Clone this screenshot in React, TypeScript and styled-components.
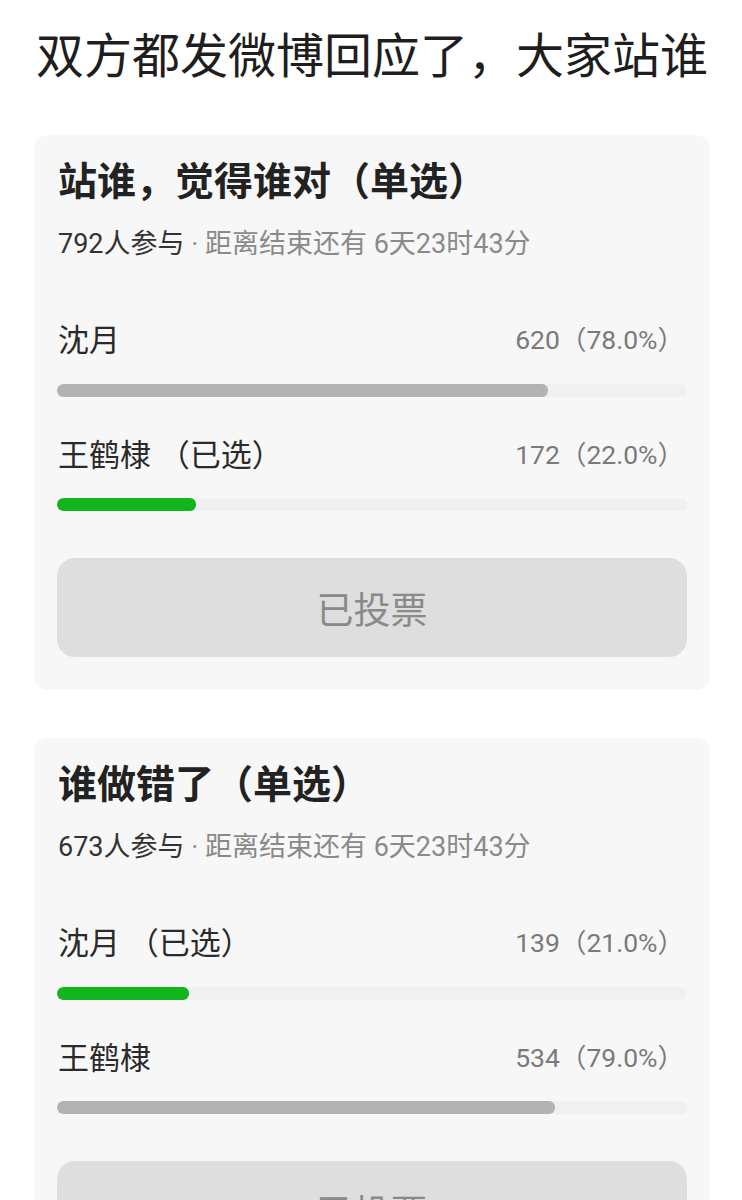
import React from 'react';
import styled, { createGlobalStyle } from 'styled-components';

type Option = { name: string; count: number; percent: number; chosen?: boolean };
type Poll = { title: string; people: number; left: string; options: Option[] };

const polls: Poll[] = [
    {
        title: '站谁，觉得谁对（单选）',
        people: 792,
        left: '6天23时43分',
        options: [
            { name: '沈月', count: 620, percent: 78.0 },
            { name: '王鹤棣', count: 172, percent: 22.0, chosen: true },
        ],
    },
    {
        title: '谁做错了（单选）',
        people: 673,
        left: '6天23时43分',
        options: [
            { name: '沈月', count: 139, percent: 21.0, chosen: true },
            { name: '王鹤棣', count: 534, percent: 79.0 },
        ],
    },
];

// 투표 카드 목록
function App() {
    return (
        <Page>
            <GlobalStyle />
            <Heading>双方都发微博回应了，大家站谁</Heading>
            <CardList>
                {polls.map((poll) => (
                    <Card key={poll.title}>
                        <Title>{poll.title}</Title>
                        <Meta>
                            <strong>{poll.people}人参与</strong> · 距离结束还有 {poll.left}
                        </Meta>
                        {poll.options.map((opt, i) => (
                            <OptionBlock key={opt.name} first={i === 0}>
                                <OptionRow>
                                    <OptionName>
                                        {opt.name}
                                        {opt.chosen && ' （已选）'}
                                    </OptionName>
                                    <OptionCount>
                                        {opt.count}（{opt.percent.toFixed(1)}%）
                                    </OptionCount>
                                </OptionRow>
                                <Track first={i === 0}>
                                    <Fill chosen={!!opt.chosen} style={{ width: `${opt.percent}%` }} />
                                </Track>
                            </OptionBlock>
                        ))}
                        <VotedBtn disabled>已投票</VotedBtn>
                    </Card>
                ))}
            </CardList>
        </Page>
    );
}

const GlobalStyle = createGlobalStyle`
    html, body {
        margin: 0;
        padding: 0;
        background: #fff;
    }
    body {
        font-family: Roboto, "Noto Sans CJK SC", sans-serif;
    }
`;

const Page = styled.div`
    width: 742px;
    height: 1200px;
    overflow: hidden;
    background: #fff;
`;

const Heading = styled.h1`
    margin: 0;
    padding: 27px 36px 0;
    font-size: 48px;
    line-height: 60px;
    font-weight: 400;
    color: #1e1e1e;
    white-space: nowrap;
`;

const CardList = styled.div`
    display: flex;
    flex-direction: column;
    gap: 48px;
    margin: 48px 32px 0 34px;
`;

const Card = styled.div`
    background: #f7f7f7;
    border-radius: 14px;
    padding: 23px 23px 33px;
`;

const Title = styled.div`
    font-size: 39px;
    line-height: 48px;
    font-weight: bold;
    color: #222;
    padding-left: 1px;
`;

const Meta = styled.div`
    margin-top: 23px;
    font-size: 27px;
    line-height: 30px;
    color: #8a8a8a;
    padding-left: 1px;
    white-space: nowrap;
    & strong {
        font-weight: 400;
        color: #333;
    }
`;

const OptionBlock = styled.div<{ first: boolean }>`
    margin-top: ${(p) => (p.first ? '58px' : '35px')};
`;

const OptionRow = styled.div`
    display: flex;
    justify-content: space-between;
    align-items: center;
    height: 40px;
`;

const OptionName = styled.span`
    font-size: 31px;
    color: #2a2a2a;
    padding-left: 1px;
    white-space: pre;
`;

const OptionCount = styled.span`
    font-size: 26.5px;
    color: #7a7a7a;
    padding-right: 3px;
`;

const Track = styled.div<{ first: boolean }>`
    margin-top: ${(p) => (p.first ? '27px' : '26px')};
    height: 13px;
    background: #f0f0f0;
    border-radius: 6px;
    overflow: hidden;
`;

const Fill = styled.div<{ chosen: boolean }>`
    height: 100%;
    border-radius: 6px;
    background: ${(p) => (p.chosen ? '#14b41c' : '#b3b3b3')};
`;

const VotedBtn = styled.button`
    display: block;
    width: 100%;
    height: 99px;
    margin-top: 47px;
    border: 0;
    border-radius: 18px;
    background: #dedede;
    color: #8a8a8a;
    font-family: "Noto Sans CJK SC", sans-serif;
    font-size: 37px;
    cursor: default;
`;

export default App;
